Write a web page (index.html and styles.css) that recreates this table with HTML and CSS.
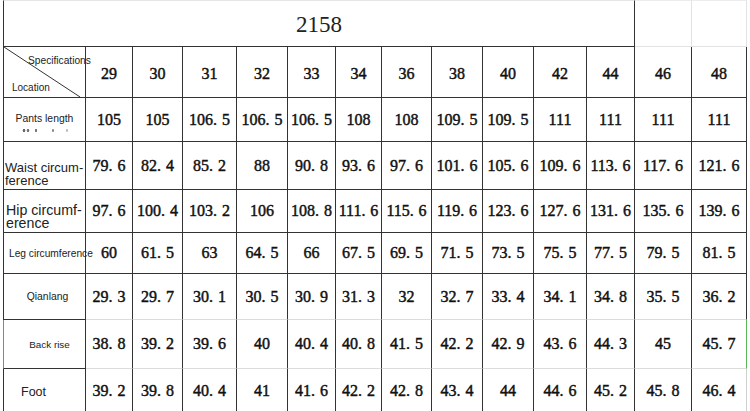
FILE: index.html
```html
<!DOCTYPE html>
<html lang="en">
<head>
<meta charset="utf-8">
<title>2158 size chart</title>
<link rel="stylesheet" href="styles.css">
</head>
<body>
<div class="sheet">
  <div class="row r-title">
    <div class="c title first">2158</div>
    <div class="c blank"></div>
    <div class="c blank"></div>
  </div>

  <div class="row r-head">
    <div class="c label first diag">
      <svg class="diag-line" viewBox="0 0 82 50" preserveAspectRatio="none"><line x1="0" y1="0" x2="77" y2="50"/></svg>
      <span class="spec">Specifications</span>
      <span class="loc">Location</span>
    </div>
    <div class="c num">29</div><div class="c num">30</div><div class="c num">31</div><div class="c num">32</div><div class="c num">33</div><div class="c num">34</div><div class="c num">36</div><div class="c num">38</div><div class="c num">40</div><div class="c num">42</div><div class="c num">44</div><div class="c num">46</div><div class="c num">48</div>
  </div>

  <div class="row r-pants">
    <div class="c label first pants"><span class="small">Pants length</span><span class="smudge"></span></div>
    <div class="c num">105</div><div class="c num">105</div><div class="c num">106<span class="dp">.</span>5</div><div class="c num">106<span class="dp">.</span>5</div><div class="c num">106<span class="dp">.</span>5</div><div class="c num">108</div><div class="c num">108</div><div class="c num">109<span class="dp">.</span>5</div><div class="c num">109<span class="dp">.</span>5</div><div class="c num">111</div><div class="c num">111</div><div class="c num">111</div><div class="c num">111</div>
  </div>

  <div class="row r-waist">
    <div class="c label first waist"><span class="over">Waist circum-<br>ference</span></div>
    <div class="c num">79<span class="dp">.</span>6</div><div class="c num">82<span class="dp">.</span>4</div><div class="c num">85<span class="dp">.</span>2</div><div class="c num">88</div><div class="c num">90<span class="dp">.</span>8</div><div class="c num">93<span class="dp">.</span>6</div><div class="c num">97<span class="dp">.</span>6</div><div class="c num">101<span class="dp">.</span>6</div><div class="c num">105<span class="dp">.</span>6</div><div class="c num">109<span class="dp">.</span>6</div><div class="c num">113<span class="dp">.</span>6</div><div class="c num">117<span class="dp">.</span>6</div><div class="c num">121<span class="dp">.</span>6</div>
  </div>

  <div class="row r-hip">
    <div class="c label first hip"><span class="over">Hip circumf-<br>erence</span></div>
    <div class="c num">97<span class="dp">.</span>6</div><div class="c num">100<span class="dp">.</span>4</div><div class="c num">103<span class="dp">.</span>2</div><div class="c num">106</div><div class="c num">108<span class="dp">.</span>8</div><div class="c num">111<span class="dp">.</span>6</div><div class="c num">115<span class="dp">.</span>6</div><div class="c num">119<span class="dp">.</span>6</div><div class="c num">123<span class="dp">.</span>6</div><div class="c num">127<span class="dp">.</span>6</div><div class="c num">131<span class="dp">.</span>6</div><div class="c num">135<span class="dp">.</span>6</div><div class="c num">139<span class="dp">.</span>6</div>
  </div>

  <div class="row r-leg">
    <div class="c label first leg"><span class="over">Leg circumference</span></div>
    <div class="c num">60</div><div class="c num">61<span class="dp">.</span>5</div><div class="c num">63</div><div class="c num">64<span class="dp">.</span>5</div><div class="c num">66</div><div class="c num">67<span class="dp">.</span>5</div><div class="c num">69<span class="dp">.</span>5</div><div class="c num">71<span class="dp">.</span>5</div><div class="c num">73<span class="dp">.</span>5</div><div class="c num">75<span class="dp">.</span>5</div><div class="c num">77<span class="dp">.</span>5</div><div class="c num">79<span class="dp">.</span>5</div><div class="c num">81<span class="dp">.</span>5</div>
  </div>

  <div class="row r-qian soft">
    <div class="c label first qian">Qianlang</div>
    <div class="c num">29<span class="dp">.</span>3</div><div class="c num">29<span class="dp">.</span>7</div><div class="c num">30<span class="dp">.</span>1</div><div class="c num">30<span class="dp">.</span>5</div><div class="c num">30<span class="dp">.</span>9</div><div class="c num">31<span class="dp">.</span>3</div><div class="c num">32</div><div class="c num">32<span class="dp">.</span>7</div><div class="c num">33<span class="dp">.</span>4</div><div class="c num">34<span class="dp">.</span>1</div><div class="c num">34<span class="dp">.</span>8</div><div class="c num">35<span class="dp">.</span>5</div><div class="c num">36<span class="dp">.</span>2</div>
  </div>

  <div class="row r-back soft">
    <div class="c label first back">Back rise</div>
    <div class="c num">38<span class="dp">.</span>8</div><div class="c num">39<span class="dp">.</span>2</div><div class="c num">39<span class="dp">.</span>6</div><div class="c num">40</div><div class="c num">40<span class="dp">.</span>4</div><div class="c num">40<span class="dp">.</span>8</div><div class="c num">41<span class="dp">.</span>5</div><div class="c num">42<span class="dp">.</span>2</div><div class="c num">42<span class="dp">.</span>9</div><div class="c num">43<span class="dp">.</span>6</div><div class="c num">44<span class="dp">.</span>3</div><div class="c num">45</div><div class="c num">45<span class="dp">.</span>7</div>
  </div>

  <div class="row r-foot soft">
    <div class="c label first foot">Foot</div>
    <div class="c num">39<span class="dp">.</span>2</div><div class="c num">39<span class="dp">.</span>8</div><div class="c num">40<span class="dp">.</span>4</div><div class="c num">41</div><div class="c num">41<span class="dp">.</span>6</div><div class="c num">42<span class="dp">.</span>2</div><div class="c num">42<span class="dp">.</span>8</div><div class="c num">43<span class="dp">.</span>4</div><div class="c num">44</div><div class="c num">44<span class="dp">.</span>6</div><div class="c num">45<span class="dp">.</span>2</div><div class="c num">45<span class="dp">.</span>8</div><div class="c num">46<span class="dp">.</span>4</div>
  </div>
</div>
</body>
</html>
```

FILE: styles.css
```css
* { box-sizing: border-box; }

html, body {
  margin: 0;
  padding: 0;
  background: #fff;
  overflow: hidden;
}

body {
  width: 750px;
  height: 411px;
  padding-left: 3px;
}

.sheet {
  display: grid;
  grid-template-columns: 83px 47px 50px 54px 51px 48px 46px 50px 51px 51px 53px 48px 57px 55px;
  grid-template-rows: 47px 51px 44px 48px 43px 41px 46px 49px 45px;
  color: #111;
}

.row { display: contents; }

.c {
  background: #fff;
  border-right: 1px solid #333;
  border-bottom: 1px solid #333;
  display: flex;
  align-items: center;
  justify-content: center;
  white-space: nowrap;
}

.first { border-left: 1px solid #333; }

/* title row */
.title {
  grid-column: span 12;
  border-top: 1px solid #e6e6e6;
  font-family: "Liberation Serif", "DejaVu Serif", serif;
  font-size: 23px;
  color: #222;
  padding-top: 2px;
}

.blank {
  border-top: 1px solid #ececec;
  border-right-color: #e2e2e2;
  border-bottom-color: #e2e2e2;
}

/* numbers */
.num {
  font-family: "Liberation Serif", "DejaVu Serif", serif;
  font-weight: 400;
  font-size: 16px;
  color: #111;
  -webkit-text-stroke: 0.45px #111;
}

.r-head .num { padding-top: 4px; }
.r-pants .num { padding-top: 1px; }

.dp {
  display: inline-block;
  width: 0.55em;
}

/* labels */
.label {
  font-family: "Liberation Sans", Arial, sans-serif;
  color: #222;
  overflow: visible;
}

.over {
  position: relative;
  z-index: 1;
}

.diag {
  position: relative;
  flex-direction: column;
  align-items: flex-start;
  justify-content: flex-start;
}

.diag-line {
  position: absolute;
  left: 0;
  top: 0;
  width: 100%;
  height: 100%;
}

.diag-line line {
  stroke: #333;
  stroke-width: 1;
  vector-effect: non-scaling-stroke;
}

.spec {
  font-size: 10.2px;
  line-height: 12px;
  margin: 8px 0 0 24px;
  position: relative;
  z-index: 1;
}

.loc {
  font-size: 10px;
  line-height: 12px;
  margin: 15px 0 0 8px;
  position: relative;
}

.pants {
  flex-direction: column;
  gap: 4px;
  padding-top: 6px;
}

.small {
  font-size: 10.4px;
  line-height: 12px;
}

.smudge {
  width: 50px;
  height: 3px;
  background:
    radial-gradient(circle, #666 0 1.2px, transparent 1.6px) 2px 0 / 4px 3px no-repeat,
    radial-gradient(circle, #777 0 1.2px, transparent 1.6px) 6px 0 / 4px 3px no-repeat,
    radial-gradient(circle, #777 0 1.1px, transparent 1.5px) 14px 0 / 4px 3px no-repeat,
    radial-gradient(circle, #888 0 1px, transparent 1.5px) 31px 0 / 4px 3px no-repeat,
    radial-gradient(circle, #bbb 0 1px, transparent 1.5px) 45px 0 / 4px 3px no-repeat;
}

.waist {
  justify-content: flex-start;
  white-space: normal;
  font-size: 13px;
  line-height: 13.3px;
  padding: 17px 0 0 1px;
}

.hip {
  justify-content: flex-start;
  white-space: normal;
  font-size: 14.2px;
  line-height: 12.7px;
  padding: 12px 0 0 2px;
}

.leg {
  justify-content: flex-start;
  font-size: 10.2px;
  padding-left: 5px;
  padding-top: 1px;
}

.qian {
  font-size: 10.4px;
  padding-left: 6px;
}

.back {
  font-size: 9.9px;
  padding-left: 10px;
  padding-top: 1px;
}

.foot {
  justify-content: flex-start;
  font-size: 12.5px;
  padding-left: 17px;
  padding-top: 1px;
}

/* softer rules in the lower rows */
.soft .num { border-bottom-color: #dcdcdc; }
.r-back .first { border-left: 1px solid #4caf50; }
.r-back .num:last-child { border-right: 1px solid #5cb85c; }
.r-foot .num:last-child { border-right-color: #cfcfcf; }
```
